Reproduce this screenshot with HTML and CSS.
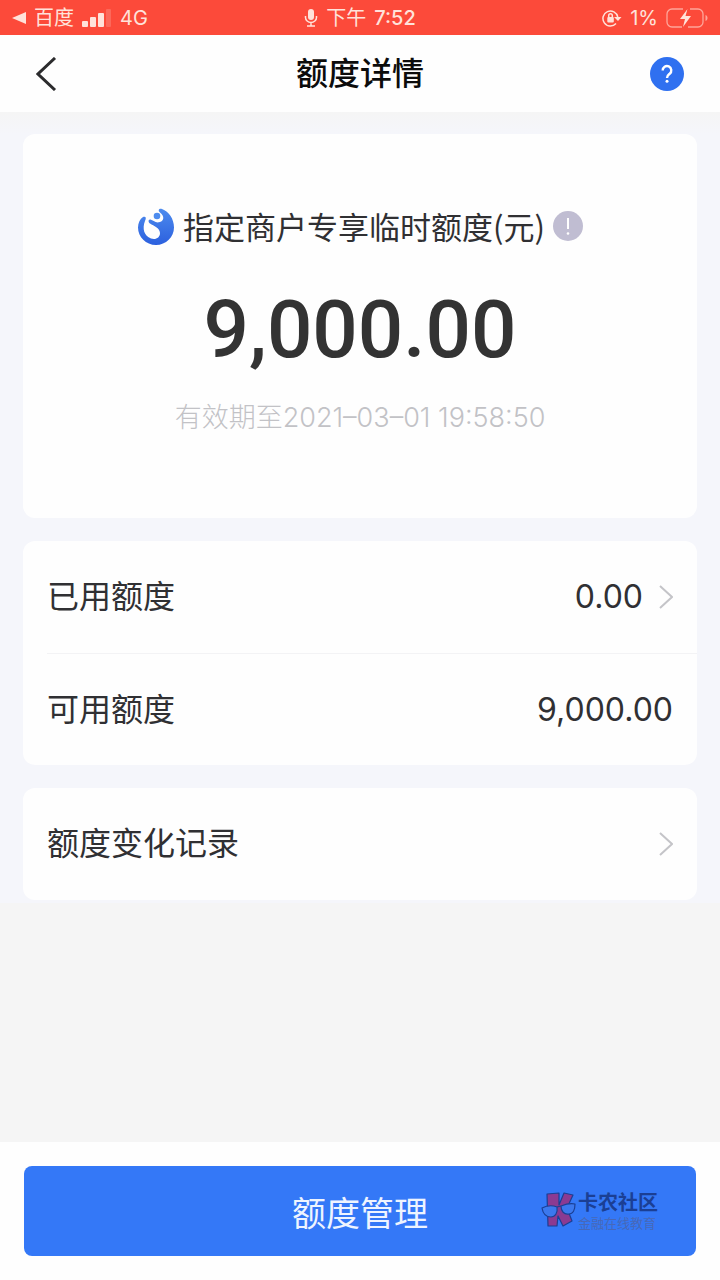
FILE: index.html
```html
<!DOCTYPE html>
<html lang="zh-CN">
<head>
  <meta charset="UTF-8">
  <meta name="viewport" content="width=device-width, initial-scale=1.0">
  <title>额度详情</title>
  <link rel="stylesheet" href="styles.css">
</head>
<body>
  <div class="status-bar">
    <div class="status-left">
      <svg width="14" height="14" viewBox="0 0 14 14"><path d="M14 1v12L0 7z" fill="currentColor"/></svg>
      <span>百度</span>
      <svg class="signal" width="30" height="18" viewBox="0 0 30 18" fill="currentColor">
        <rect x="0" y="12" width="6" height="6" rx="1"/>
        <rect x="8" y="8" width="6" height="10" rx="1"/>
        <rect x="16" y="4" width="6" height="14" rx="1"/>
        <rect x="24" y="0" width="5" height="18" rx="1" opacity="0.2"/>
      </svg>
      <span>4G</span>
    </div>
    <div class="status-center">
      <svg width="14" height="18" viewBox="0 0 14 18" fill="none" stroke="currentColor" stroke-width="1.5">
        <rect x="4" y="0" width="6" height="11" rx="3" fill="currentColor" stroke="none"/>
        <path d="M1.5 7v1.500a5.500 5 0 0 0 11 0V7M7 13.500V17M3 17h8"/>
      </svg>
      <span>下午</span>
      <span class="clock">7:52</span>
    </div>
    <div class="status-right">
      <svg width="20" height="18" viewBox="0 0 20 18" fill="none" stroke="currentColor" stroke-width="1.5">
        <path d="M14 14.500A7.500 7.500 0 1 1 15.800 8"/>
        <path d="M12 8H19.500L16 12z" fill="currentColor" stroke="none"/>
        <rect x="5.300" y="8" width="6.500" height="5.500" rx="1" fill="currentColor" stroke="none"/>
        <path d="M6.700 8.500V6.500a1.800 1.800 0 0 1 3.600 0v2"/>
      </svg>
      <span>1%</span>
      <svg width="42" height="20" viewBox="0 0 42 20">
        <path d="M17 1H6a5 5 0 0 0-5 5v8a5 5 0 0 0 5 5h10M24 1h8a5 5 0 0 1 5 5v8a5 5 0 0 1-5 5H22" fill="none" stroke="currentColor" stroke-width="1.300" opacity="0.6"/>
        <path d="M39.500 7v6c1.500-.6 2-1.800 2-3s-.5-2.400-2-3z" fill="currentColor" opacity="0.6"/>
        <path d="M21.500 1L14 11h5l-2 8 8-11h-5.500z" fill="currentColor"/>
      </svg>
    </div>
  </div>

  <header class="header">
    <button class="icon-btn" aria-label="返回">
      <svg width="22" height="34" viewBox="0 0 22 34"><path d="M19 1L2 17l17 16" fill="none" stroke="#2b2b2d" stroke-width="3"/></svg>
    </button>
    <h1>额度详情</h1>
    <button class="icon-btn help" aria-label="帮助">
      <svg width="34" height="34" viewBox="0 0 34 34">
        <circle cx="17" cy="17" r="17" fill="#2f70f0"/>
        <path d="M12.700 13.500a4.300 4.300 0 1 1 7 3.200c-1.700 1.400-2.700 2-2.700 4.300" fill="none" stroke="#fff" stroke-width="2.400"/>
        <circle cx="17" cy="24.300" r="1.500" fill="#fff"/>
      </svg>
    </button>
  </header>

  <main class="content">
    <div class="cards">
      <section class="card summary">
        <div class="summary-title">
          <svg width="38" height="38" viewBox="0 0 38 38">
            <defs>
              <linearGradient id="logoFill" x1="0" y1="0" x2="0" y2="1">
                <stop offset="0" stop-color="#4d8bee"/>
                <stop offset="1" stop-color="#2c60de"/>
              </linearGradient>
            </defs>
            <path d="M6 10C3 12 1 16 1 20.500 1 30 9 38 19 38S37 30 37 20.500C37 12 32 4.500 25 2 22 1 20.500 3.500 23 5.500 28 9 27 14.500 22 15.300 18 16 16 13 13.500 12.500 11 12.500 11 15 13 16.500 17 19 22.500 20.500 23 26 23 31 18.500 33 14 31.500 7 29 5 21.500 8 14 9.500 11 9 9 6 10z" fill="url(#logoFill)"/>
            <circle cx="20" cy="9" r="3.300" fill="#4d8bee"/>
          </svg>
          <h2>指定商户专享临时额度(元)</h2>
          <button class="icon-btn" aria-label="额度说明">
            <svg width="30" height="30" viewBox="0 0 30 30">
              <circle cx="15" cy="15" r="15" fill="#c0bdd2"/>
              <path d="M15 7v11" stroke="#fff" stroke-width="2"/>
              <circle cx="15" cy="22.500" r="1.300" fill="#fff"/>
            </svg>
          </button>
        </div>
        <div class="amount">9,000.00</div>
        <p class="expiry">有效期至2021–03–01 19:58:50</p>
      </section>

      <section class="card">
        <a class="row" href="#">
          <span>已用额度</span>
          <span class="row-value">0.00</span>
          <svg class="arrow" width="14" height="26" viewBox="0 0 14 26"><path d="M1 2l12 11L1 24" fill="none" stroke="#c4c4c8" stroke-width="2"/></svg>
        </a>
        <div class="row">
          <span>可用额度</span>
          <span class="row-value">9,000.00</span>
        </div>
      </section>

      <section class="card">
        <a class="row" href="#">
          <span>额度变化记录</span>
          <svg class="arrow" width="14" height="26" viewBox="0 0 14 26"><path d="M1 2l12 11L1 24" fill="none" stroke="#c4c4c8" stroke-width="2"/></svg>
        </a>
      </section>
    </div>
  </main>

  <footer class="footer">
    <button class="btn-primary">额度管理</button>
    <div class="watermark">
      <svg width="36" height="36" viewBox="0 0 36 36" stroke="#1b3f94" stroke-width="1.200" stroke-linejoin="round">
        <path d="M6 2L18 1v12L23 1l9 2-6 13 5 13-9 5-5-10-1 10H7z" fill="#8b3a92"/>
        <path d="M1 16c4-2 10-3 15-1 1 6-2 10-6 10-5 0-8-3-9-9zM20 14c5-2 9-3 14-2 0 6-2 10-6 10-5 1-8-3-8-8z" fill="#3b78ee"/>
        <path d="M16 15l4-1" fill="none"/>
      </svg>
      <div class="watermark-text">
        <div class="watermark-name">卡农社区</div>
        <div class="watermark-sub">金融在线教育</div>
      </div>
    </div>
  </footer>
</body>
</html>
```
FILE: styles.css
```css
:root {
  --primary-color: #3478f7;
  --status-color: #fc4a3a;
  --text-color: #303033;
  --page-bg: #f5f5f5;
  --cards-bg: #f5f6fb;
}

* {
  box-sizing: border-box;
}

body {
  margin: 0;
  min-height: 100vh;
  display: flex;
  flex-direction: column;
  font-family: Inter, "Noto Sans CJK SC", sans-serif;
  color: var(--text-color);
  background-color: var(--page-bg);
}

h1, h2, p {
  margin: 0;
}

svg {
  display: block;
  flex-shrink: 0;
}

button {
  border: none;
  padding: 0;
  font-family: inherit;
  cursor: pointer;
}

.icon-btn {
  background: none;
}

/* Status bar */
.status-bar {
  display: grid;
  grid-template-columns: 1fr auto 1fr;
  align-items: center;
  height: 35px;
  padding: 0 12px;
  background-color: var(--status-color);
  color: #ffe2da;
  font-size: 20px;
  line-height: 34px;
}

.status-left,
.status-center,
.status-right {
  display: flex;
  align-items: center;
  gap: 8px;
}

.status-right {
  justify-content: flex-end;
}

.clock {
  font-weight: 500;
}

/* Header */
.header {
  display: grid;
  grid-template-columns: 1fr auto 1fr;
  align-items: center;
  height: 77px;
  padding: 0 36px;
  background-color: #fefefe;
}

.header h1 {
  font-size: 32px;
  font-weight: 500;
  line-height: 48px;
  color: #0c0c0c;
}

.help {
  justify-self: end;
}

/* Cards */
.content {
  flex: 1;
}

.cards {
  display: flex;
  flex-direction: column;
  gap: 23px;
  padding: 22px 23px 3px;
  background: linear-gradient(var(--page-bg), var(--cards-bg) 22px);
}

.card {
  background-color: #fefefe;
  border-radius: 12px;
}

.summary {
  padding: 68px 24px 82px;
  text-align: center;
}

.summary-title {
  display: flex;
  align-items: center;
  justify-content: center;
  gap: 8px;
}

.summary-title h2 {
  font-family: "Noto Sans CJK SC", sans-serif;
  font-size: 31px;
  font-weight: 400;
  line-height: 48px;
}

.amount {
  font-family: Roboto, sans-serif;
  font-size: 80px;
  font-weight: 500;
  line-height: 96px;
  margin: 32px 0 22px;
  color: #333;
}

.expiry {
  font-size: 27px;
  font-weight: 300;
  line-height: 36px;
  color: #c2c2c6;
}

.row {
  display: flex;
  align-items: center;
  height: 112px;
  margin-left: 24px;
  padding-right: 24px;
  font-size: 32px;
  line-height: 48px;
  color: inherit;
  text-decoration: none;
}

.row + .row {
  border-top: 1px solid #f3f3f5;
}

.row-value {
  margin-left: auto;
}

.arrow {
  margin-left: auto;
}

.row-value + .arrow {
  margin-left: 16px;
}

/* Footer */
.footer {
  position: relative;
  padding: 24px;
  background-color: #fefefe;
}

.btn-primary {
  display: block;
  width: 100%;
  height: 90px;
  border-radius: 8px;
  background-color: var(--primary-color);
  color: #eef4ff;
  font-size: 34px;
}

.watermark {
  position: absolute;
  right: 62px;
  top: 48px;
  display: flex;
  align-items: center;
  gap: 1px;
  color: #1b3f94;
  pointer-events: none;
}

.watermark-name {
  font-size: 20px;
  font-weight: 700;
  line-height: 26px;
}

.watermark-sub {
  font-size: 13px;
  line-height: 14px;
  color: #4768b8;
}
```
